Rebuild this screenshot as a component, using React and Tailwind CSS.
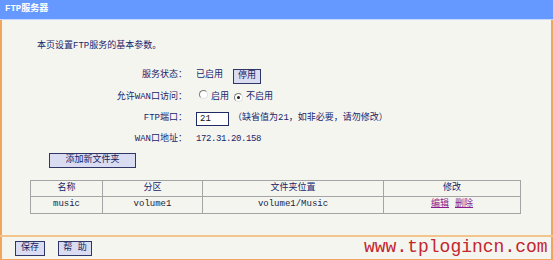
const font = { fontFamily: '"Liberation Mono", "Noto Sans CJK SC", monospace' };

const Btn = ({ children, className = "" }) => (
  <button
    className={
      "h-[15px] border border-[#2f3566] bg-[#dadcf2] text-[9px] leading-[13px] text-[#14225e] px-[4px] " +
      className
    }
    style={font}
  >
    {children}
  </button>
);

const Radio = ({ checked }) => (
  <span className="inline-flex w-[9px] h-[9px] rounded-full border border-[#7a7a7a] border-r-[#e0e0e0] border-b-[#e0e0e0] bg-white items-center justify-center">
    {checked && <span className="w-[3px] h-[3px] rounded-full bg-[#222]" />}
  </span>
);

const Row = ({ label, h, children }) => (
  <div className={"flex items-center " + h}>
    <div className="w-[185px] text-right">{label}</div>
    <div className="pl-[9px] flex items-center">{children}</div>
  </div>
);

export default function App() {
  return (
    <div
      className="relative w-[553px] h-[260px] overflow-hidden bg-[#f5f5f0] text-[9px] text-[#17246b]"
      style={font}
    >
      <div className="h-[19px] bg-[#6699ff] text-white pl-[5px] flex items-center font-bold">
        FTP服务器
      </div>
      <div className="h-[1px] bg-[#c9d9fb]" />

      <div className="h-[215px] border-l-2 border-r-2 border-[#f2a55e] bg-[#f5f5f0] w-[553px]">
        <div className="pt-[19px] pl-[35px] leading-[14px]">本页设置FTP服务的基本参数。</div>

        <div className="mt-[12px]">
          <Row label="服务状态：" h="h-[22px]">
            <span>已启用</span>
            <Btn className="ml-[10px] w-[28px] px-0">停用</Btn>
          </Row>
          <Row label="允许WAN口访问：" h="h-[21px]">
            <span className="ml-[3px]"><Radio /></span>
            <span className="ml-[3px]">启用</span>
            <span className="ml-[5px]"><Radio checked /></span>
            <span className="ml-[3px]">不启用</span>
          </Row>
          <Row label="FTP端口：" h="h-[21px]">
            <span className="w-[33px] h-[14px] border border-[#1f2a66] bg-white pl-[3px] leading-[12px] text-[#111]">
              21
            </span>
            <span className="ml-[4px]">（缺省值为21，如非必要，请勿修改）</span>
          </Row>
          <Row label="WAN口地址：" h="h-[21px]">
            <span className="tracking-[-0.4px]">172.31.20.158</span>
          </Row>
        </div>

        <div className="mt-[3px] pl-[47px]">
          <Btn className="w-[87px]">添加新文件夹</Btn>
        </div>

        <table className="mt-[12px] ml-[28px] w-[491px] border-collapse border border-[#9c9c9c] text-center">
          <thead>
            <tr className="h-[16px]">
              <td className="w-[72px] border border-[#a4a4a4]">名称</td>
              <td className="w-[100px] border border-[#a4a4a4]">分区</td>
              <td className="w-[181px] border border-[#a4a4a4]">文件夹位置</td>
              <td className="border border-[#a4a4a4]">修改</td>
            </tr>
          </thead>
          <tbody>
            <tr className="h-[17px] text-[#1c1c3c]">
              <td className="border border-[#a4a4a4]">music</td>
              <td className="border border-[#a4a4a4]">volume1</td>
              <td className="border border-[#a4a4a4]">volume1/Music</td>
              <td className="border border-[#a4a4a4]">
                <a className="text-[#8a1b8c] underline">编辑</a>
                <span className="ml-[6px] text-[#8a1b8c] underline">删除</span>
              </td>
            </tr>
          </tbody>
        </table>
      </div>

      <div className="h-[2px] bg-[#f3c48c]" />

      <div className="h-[22px] border-l-2 border-r-2 border-[#f2a55e] flex items-center pl-[13px] gap-[13px]">
        <Btn className="w-[30px] px-0">保存</Btn>
        <Btn className="w-[34px] px-0">帮 助</Btn>
      </div>
      <div className="h-[2px] bg-[#f2a55e]" />

      <div
        className="absolute left-[364px] top-[236px] text-[18px] leading-[22px] text-[#c3262e] whitespace-nowrap"
        style={{ fontFamily: '"Liberation Mono", monospace' }}
      >
        www.tplogincn.com
      </div>
    </div>
  );
}
